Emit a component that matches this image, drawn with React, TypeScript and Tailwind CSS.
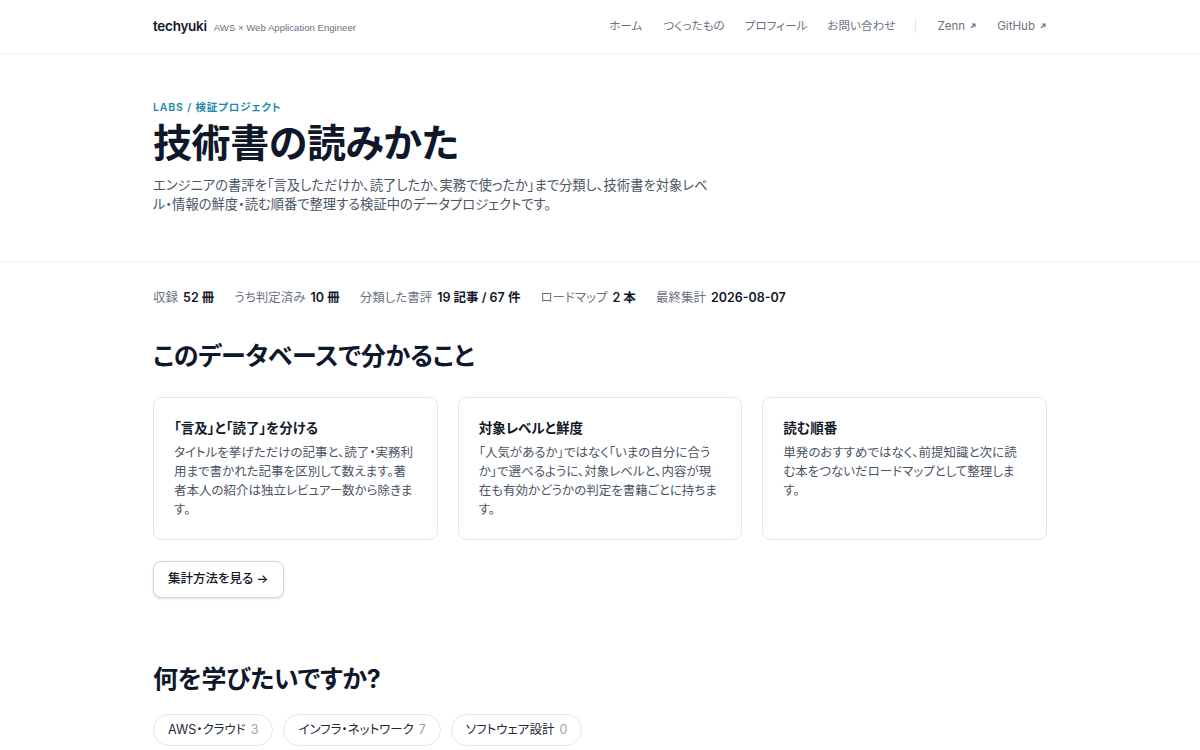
import React from "react";

const font = { fontFamily: 'Inter, "Noto Sans CJK JP", "Noto Sans", sans-serif', fontFeatureSettings: '"palt"' };

function Arrow() {
  return (
    <svg width="8" height="8" viewBox="0 0 10 10" className="ml-[4px] inline-block" fill="none" stroke="currentColor" strokeWidth="1.4">
      <path d="M2.5 7.5L7.5 2.5M3.5 2.5H7.5V6.5" />
    </svg>
  );
}

const cards = [
  {
    title: "「言及」と「読了」を分ける",
    body: "タイトルを挙げただけの記事と、読了・実務利用まで書かれた記事を区別して数えます。著者本人の紹介は独立レビュアー数から除きます。",
  },
  {
    title: "対象レベルと鮮度",
    body: "「人気があるか」ではなく「いまの自分に合うか」で選べるように、対象レベルと、内容が現在も有効かどうかの判定を書籍ごとに持ちます。",
  },
  {
    title: "読む順番",
    body: "単発のおすすめではなく、前提知識と次に読む本をつないだロードマップとして整理します。",
  },
];

const stats: [string, string][] = [
  ["収録", "52 冊"],
  ["うち判定済み", "10 冊"],
  ["分類した書評", "19 記事 / 67 件"],
  ["ロードマップ", "2 本"],
  ["最終集計", "2026-08-07"],
];

const pills: [string, string][] = [
  ["AWS・クラウド", "3"],
  ["インフラ・ネットワーク", "7"],
  ["ソフトウェア設計", "0"],
];

export default function App() {
  return (
    <div className="min-h-screen bg-white text-[#0f172a]" style={font}>
      <header className="border-b border-[#f1f3f5]">
        <div className="mx-auto flex h-[53px] max-w-[894px] items-center justify-between">
          <div className="flex items-baseline gap-[7px]">
            <span className="text-[13.5px] font-semibold tracking-[-0.02em] text-[#111827]">techyuki</span>
            <span className="text-[9.6px] text-[#6b7280]" style={{ fontFamily: '"Liberation Sans", Arial, sans-serif' }}>AWS × Web Application Engineer</span>
          </div>
          <nav className="flex items-center text-[11.6px] text-[#6b7280]">
            <span>ホーム</span>
            <span className="ml-[21px]">つくったもの</span>
            <span className="ml-[20px]">プロフィール</span>
            <span className="ml-[20px]">お問い合わせ</span>
            <span className="ml-[20px] h-[14px] w-px bg-[#e5e7eb]" />
            <span className="ml-[21px] flex items-center">Zenn<Arrow /></span>
            <span className="ml-[20px] flex items-center">GitHub<Arrow /></span>
          </nav>
        </div>
      </header>

      <section className="border-b border-[#f1f3f5]">
        <div className="mx-auto max-w-[894px] pb-[46px] pt-[46px]">
          <div className="text-[10.5px] font-semibold tracking-[0.08em] text-[#1d8aa8]">LABS / 検証プロジェクト</div>
          <h1 className="mt-[4px] text-[39px] font-bold leading-[1.2] tracking-[-0.01em] text-[#0f172a]">技術書の読みかた</h1>
          <p className="mt-[9px] max-w-[566px] text-[13.3px] leading-[19.5px] text-[#4b5563]" style={{ lineBreak: "anywhere" }}>
            エンジニアの書評を「言及しただけか、読了したか、実務で使ったか」まで分類し、技術書を対象レベル・情報の鮮度・読む順番で整理する検証中のデータプロジェクトです。
          </p>
        </div>
      </section>

      <main className="mx-auto max-w-[894px]">
        <div className="flex items-baseline gap-[20px] pt-[27px] text-[12.5px]">
          {stats.map(([k, v]) => (
            <div key={k} className="flex items-baseline gap-[5px]">
              <span className="text-[#6b7280]">{k}</span>
              <span className="font-semibold text-[#111827]">{v}</span>
            </div>
          ))}
        </div>

        <h2 className="mt-[33px] text-[25px] font-bold leading-[1.3] tracking-[-0.01em]">このデータベースで分かること</h2>

        <div className="mt-[24px] grid grid-cols-3 gap-[20px]">
          {cards.map((c) => (
            <div key={c.title} className="h-[143px] rounded-[8px] border border-[#e5e7eb] px-[20px] pt-[20px]">
              <div className="text-[13.5px] font-semibold leading-[20px] text-[#111827]">{c.title}</div>
              <p className="mt-[5px] text-[12.5px] leading-[19px] text-[#4b5563]">{c.body}</p>
            </div>
          ))}
        </div>

        <button className="mt-[21px] flex h-[37px] items-center rounded-[8px] border border-[#d1d5db] bg-white px-[14px] text-[12.5px] font-medium text-[#111827] shadow-sm">
          集計方法を見る →
        </button>

        <h2 className="mt-[65px] text-[25px] font-bold leading-[1.3] tracking-[-0.01em]">何を学びたいですか?</h2>

        <div className="mt-[19px] flex gap-[10px]">
          {pills.map(([k, n]) => (
            <div key={k} className="flex h-[32px] items-center gap-[5px] rounded-full border border-[#e5e7eb] px-[14px] text-[12.5px] text-[#1f2937]">
              <span>{k}</span>
              <span className="text-[#9ca3af]">{n}</span>
            </div>
          ))}
        </div>
        <div className="h-[40px]" />
      </main>
    </div>
  );
}
